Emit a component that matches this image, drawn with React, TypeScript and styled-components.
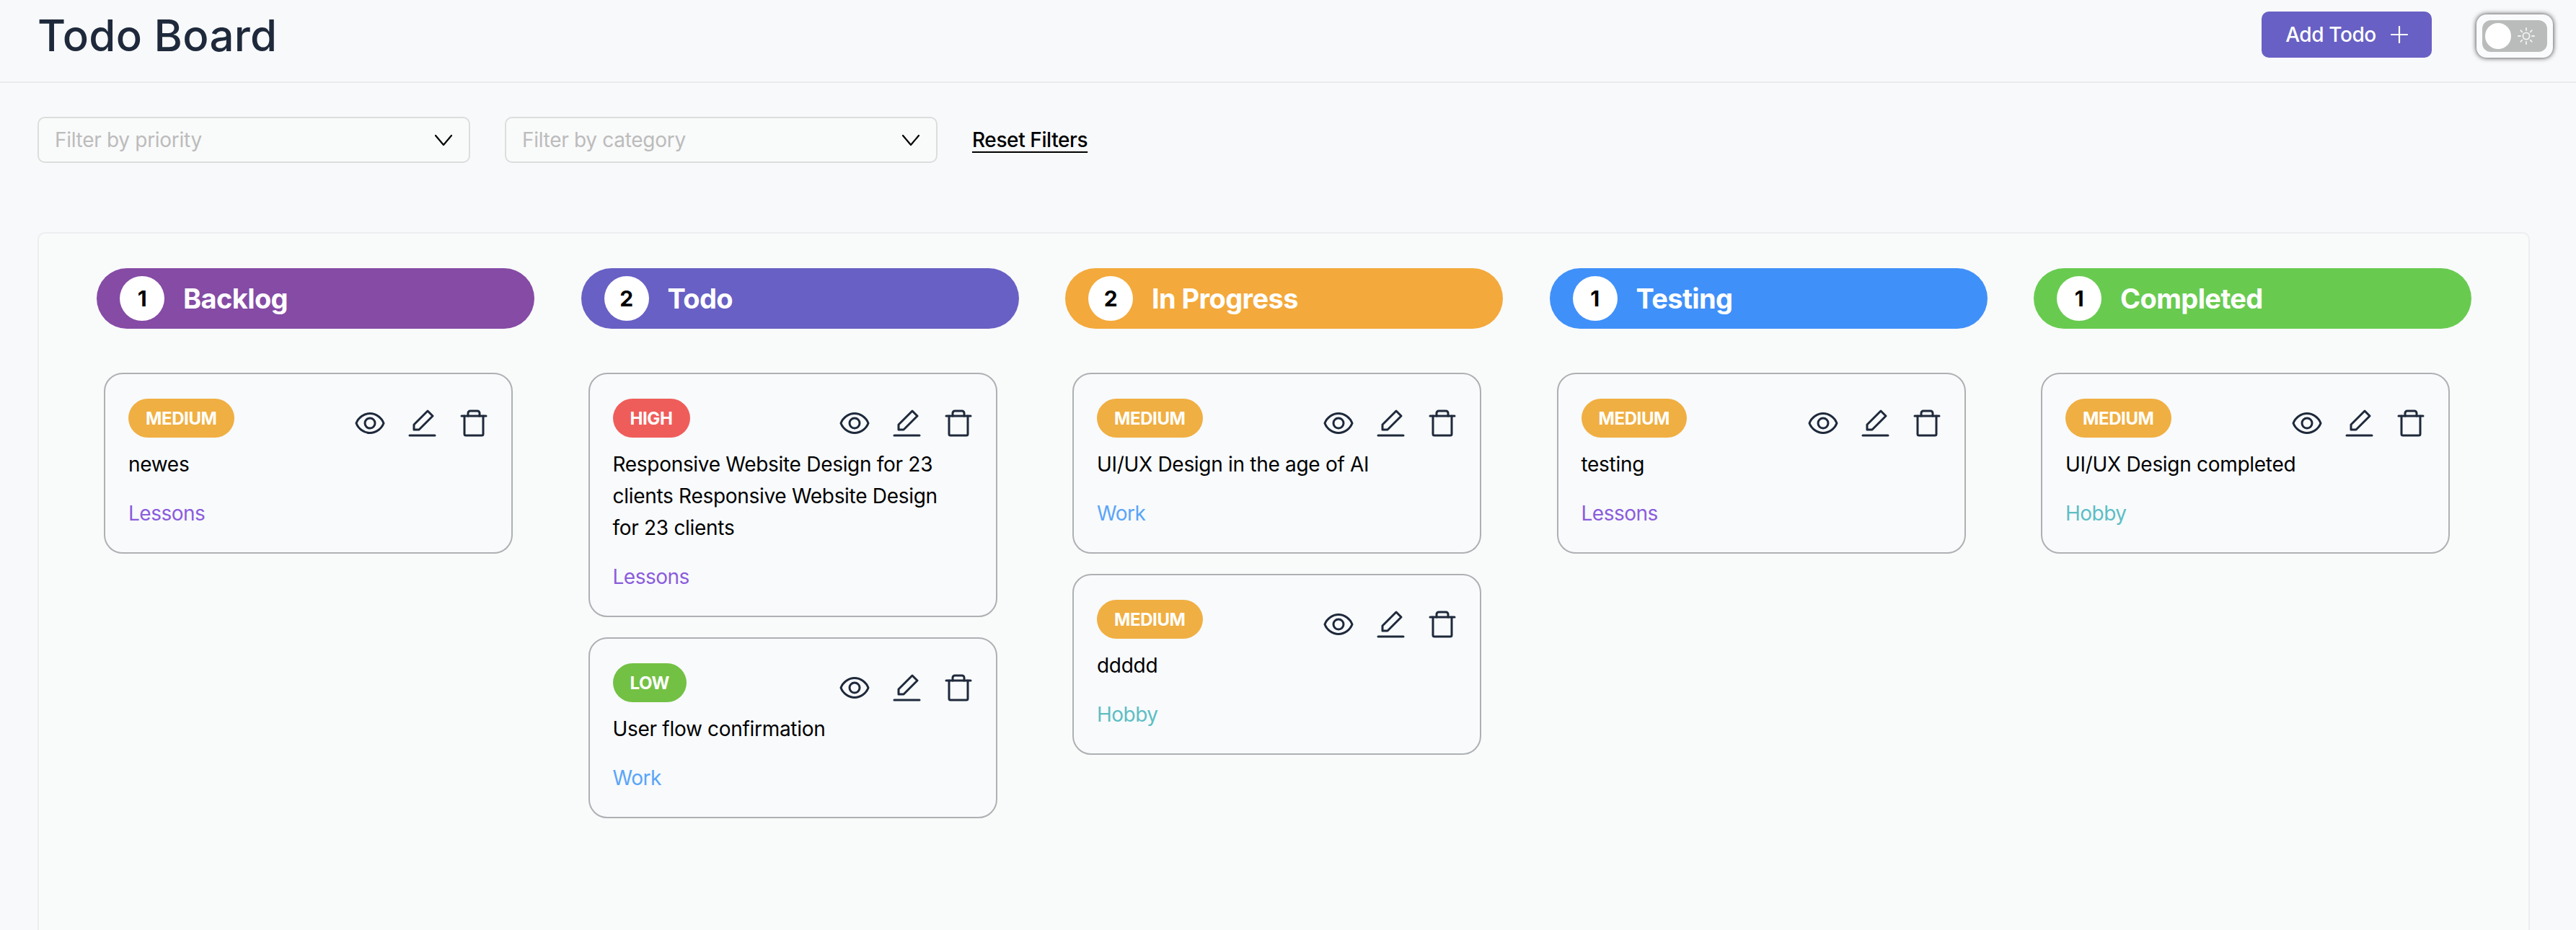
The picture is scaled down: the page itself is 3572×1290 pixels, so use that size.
import React from 'react';
import styled, { createGlobalStyle } from 'styled-components';

const GlobalStyle = createGlobalStyle`
  html, body {
    margin: 0;
    height: 1290px;
    overflow: hidden;
    background: #f8f9fb;
    font-family: "Inter", "Noto Sans", sans-serif;
  }
  * { box-sizing: border-box; }
`;

const Header = styled.header`
  display: flex;
  align-items: flex-start;
  height: 115px;
  padding: 16px 32px 0 52px;
  border-bottom: 2px solid #e9ebed;
`;

const PageTitle = styled.h1`
  flex: 1;
  margin: 0;
  font-size: 60px;
  line-height: 66px;
  font-weight: 500;
  letter-spacing: 0.3px;
  color: #1e293b;
`;

const AddButton = styled.button`
  display: flex;
  align-items: center;
  justify-content: center;
  gap: 20px;
  width: 236px;
  height: 64px;
  margin-right: 62px;
  border: none;
  border-radius: 10px;
  background: #6860c4;
  color: #fff;
  font: 500 28px "Inter", sans-serif;
  letter-spacing: -0.4px;
`;

const ToggleFrame = styled.div`
  width: 106px;
  height: 60px;
  margin-top: 4px;
  padding: 8px;
  border-radius: 14px;
  background: #fafbfc;
  box-shadow: 0 0 7px rgba(0, 0, 0, 0.8);
`;

const ToggleTrack = styled.div`
  display: flex;
  align-items: center;
  gap: 8px;
  height: 44px;
  padding: 0 4px;
  border-radius: 12px;
  background: #babcbb;
`;

const ToggleKnob = styled.span`
  width: 36px;
  height: 36px;
  border-radius: 50%;
  background: #fff;
`;

const Filters = styled.div`
  display: flex;
  align-items: center;
  gap: 48px;
  padding: 47px 52px 96px;
`;

const FilterSelect = styled.div`
  display: flex;
  align-items: center;
  justify-content: space-between;
  width: 600px;
  height: 64px;
  padding: 0 22px;
  border: 2px solid #dcdddd;
  border-radius: 10px;
  background: #f9fafa;
  color: #bcbcbc;
  font-size: 28px;
  letter-spacing: -0.3px;
`;

const ResetLink = styled.a`
  color: #000;
  font-size: 28px;
  font-weight: 500;
  letter-spacing: -0.4px;
  text-decoration: underline;
  text-underline-offset: 6px;
  text-decoration-thickness: 2px;
`;

const Board = styled.main`
  display: flex;
  gap: 64.5px;
  min-height: 1100px;
  margin: 0 64px 0 52px;
  padding: 48px 0 0 80px;
  border: 2px solid #eceef0;
  border-radius: 10px;
  background: #f9fafa;
`;

const Column = styled.section`
  display: flex;
  flex-direction: column;
  width: 607px;
`;

const ColumnHeader = styled.div<{ $color: string }>`
  display: flex;
  align-items: center;
  gap: 26px;
  height: 84px;
  margin-bottom: 61px;
  padding-left: 32px;
  border-radius: 42px;
  background: ${props => props.$color};
  color: #fff;
  font-size: 38px;
  font-weight: 700;
  letter-spacing: -0.6px;
`;

const CountBubble = styled.span`
  display: flex;
  align-items: center;
  justify-content: center;
  width: 62px;
  height: 62px;
  border-radius: 50%;
  background: #fff;
  color: #000;
  font-size: 30px;
  font-weight: 700;
`;

const CardList = styled.div`
  display: flex;
  flex-direction: column;
  gap: 28px;
  width: 567px;
  margin-left: 10px;
`;

const Card = styled.article`
  padding: 34px 44px 32px 32px;
  border: 2px solid #aeb1b3;
  border-radius: 26px;
  background: #f8fafc;
`;

const CardTop = styled.div`
  display: flex;
  align-items: flex-start;
  justify-content: space-between;
  margin-bottom: 11px;
`;

const PriorityBadge = styled.span<{ $color: string }>`
  display: flex;
  align-items: center;
  height: 54px;
  padding: 0 24px;
  border-radius: 27px;
  background: ${props => props.$color};
  color: #fff;
  font-size: 24px;
  font-weight: 700;
  letter-spacing: -0.4px;
`;

const CardActions = styled.div`
  display: flex;
  gap: 24px;
  margin: 10px -16px 0 0;
  color: #1e293b;
`;

const CardTitle = styled.p`
  margin: 0 0 24px;
  color: #000;
  font-size: 28px;
  line-height: 44px;
  letter-spacing: -0.3px;
`;

const CategoryLabel = styled.div<{ $color: string }>`
  color: ${props => props.$color};
  font-size: 28px;
  line-height: 44px;
  letter-spacing: -0.5px;
`;

const Icon = styled.svg.attrs({
  viewBox: '0 0 24 24',
  fill: 'none',
  stroke: 'currentColor',
  strokeWidth: 1.5,
  strokeLinecap: 'round',
  strokeLinejoin: 'round',
})<{ $size: number }>`
  display: block;
  width: ${props => props.$size}px;
  height: ${props => props.$size}px;
`;

const EyeIcon = () => (
  <Icon $size={48}>
    <path d="M2.5 12C4 8 8 5.25 12 5.25S20 8 21.5 12C20 16 16 18.75 12 18.75S4 16 2.5 12Z" />
    <circle cx="12" cy="12" r="3.5" />
  </Icon>
);

const PencilIcon = () => (
  <Icon $size={48}>
    <path d="M16 3.5 19.5 7 10 16.5H6.5V13Z" />
    <path d="M3.5 20.5H21" />
  </Icon>
);

const TrashIcon = () => (
  <Icon $size={48}>
    <path d="M3.5 7h17" />
    <path d="M5.5 7v12.5a1 1 0 0 0 1 1h11a1 1 0 0 0 1-1V7" />
    <path d="M8 7V5a1.5 1.5 0 0 1 1.5-1.5h5A1.5 1.5 0 0 1 16 5v2" />
  </Icon>
);

const Chevron = () => (
  <svg width="26" height="17" viewBox="0 0 26 17" fill="none" stroke="#000" strokeWidth="2.2" strokeLinecap="round" strokeLinejoin="round">
    <path d="M2 2l11 13L24 2" />
  </svg>
);

const PlusIcon = () => (
  <svg width="24" height="24" viewBox="0 0 24 24" fill="none" stroke="#fff" strokeWidth="2.2" strokeLinecap="round">
    <path d="M12 1v22M1 12h22" />
  </svg>
);

const SunIcon = () => (
  <svg width="26" height="26" viewBox="0 0 26 26" fill="none" stroke="#f2f3f3" strokeWidth="1.8" strokeLinecap="round">
    <circle cx="13" cy="13" r="4.6" />
    <path d="M13 2v3M13 21v3M2 13h3M21 13h3M5.2 5.2l2.1 2.1M18.7 18.7l2.1 2.1M5.2 20.8l2.1-2.1M18.7 7.3l2.1-2.1" />
  </svg>
);

type Todo = { priority: 'MEDIUM' | 'HIGH' | 'LOW'; title: string; category: 'Lessons' | 'Work' | 'Hobby' };

const priorityColors = { MEDIUM: '#f0af42', HIGH: '#ef5d5a', LOW: '#73c144' };
const categoryColors = { Lessons: '#8b5cdc', Work: '#5aa5f8', Hobby: '#5dbec4' };

const columns: { name: string; color: string; todos: Todo[] }[] = [
  { name: 'Backlog', color: '#854ba5', todos: [{ priority: 'MEDIUM', title: 'newes', category: 'Lessons' }] },
  {
    name: 'Todo',
    color: '#6860c4',
    todos: [
      { priority: 'HIGH', title: 'Responsive Website Design for 23 clients Responsive Website Design for 23 clients', category: 'Lessons' },
      { priority: 'LOW', title: 'User flow confirmation', category: 'Work' },
    ],
  },
  {
    name: 'In Progress',
    color: '#f3a93b',
    todos: [
      { priority: 'MEDIUM', title: 'UI/UX Design in the age of AI', category: 'Work' },
      { priority: 'MEDIUM', title: 'ddddd', category: 'Hobby' },
    ],
  },
  { name: 'Testing', color: '#4090f9', todos: [{ priority: 'MEDIUM', title: 'testing', category: 'Lessons' }] },
  { name: 'Completed', color: '#68cb50', todos: [{ priority: 'MEDIUM', title: 'UI/UX Design completed', category: 'Hobby' }] },
];

export default function App() {
  return (
    <>
      <GlobalStyle />
      <Header>
        <PageTitle>Todo Board</PageTitle>
        <AddButton>
          Add Todo
          <PlusIcon />
        </AddButton>
        <ToggleFrame>
          <ToggleTrack>
            <ToggleKnob />
            <SunIcon />
          </ToggleTrack>
        </ToggleFrame>
      </Header>
      <Filters>
        <FilterSelect>
          Filter by priority
          <Chevron />
        </FilterSelect>
        <FilterSelect>
          Filter by category
          <Chevron />
        </FilterSelect>
        <ResetLink>Reset Filters</ResetLink>
      </Filters>
      <Board>
        {columns.map(column => (
          <Column key={column.name}>
            <ColumnHeader $color={column.color}>
              <CountBubble>{column.todos.length}</CountBubble>
              {column.name}
            </ColumnHeader>
            <CardList>
              {column.todos.map(todo => (
                <Card key={todo.title}>
                  <CardTop>
                    <PriorityBadge $color={priorityColors[todo.priority]}>{todo.priority}</PriorityBadge>
                    <CardActions>
                      <EyeIcon />
                      <PencilIcon />
                      <TrashIcon />
                    </CardActions>
                  </CardTop>
                  <CardTitle>{todo.title}</CardTitle>
                  <CategoryLabel $color={categoryColors[todo.category]}>{todo.category}</CategoryLabel>
                </Card>
              ))}
            </CardList>
          </Column>
        ))}
      </Board>
    </>
  );
}
